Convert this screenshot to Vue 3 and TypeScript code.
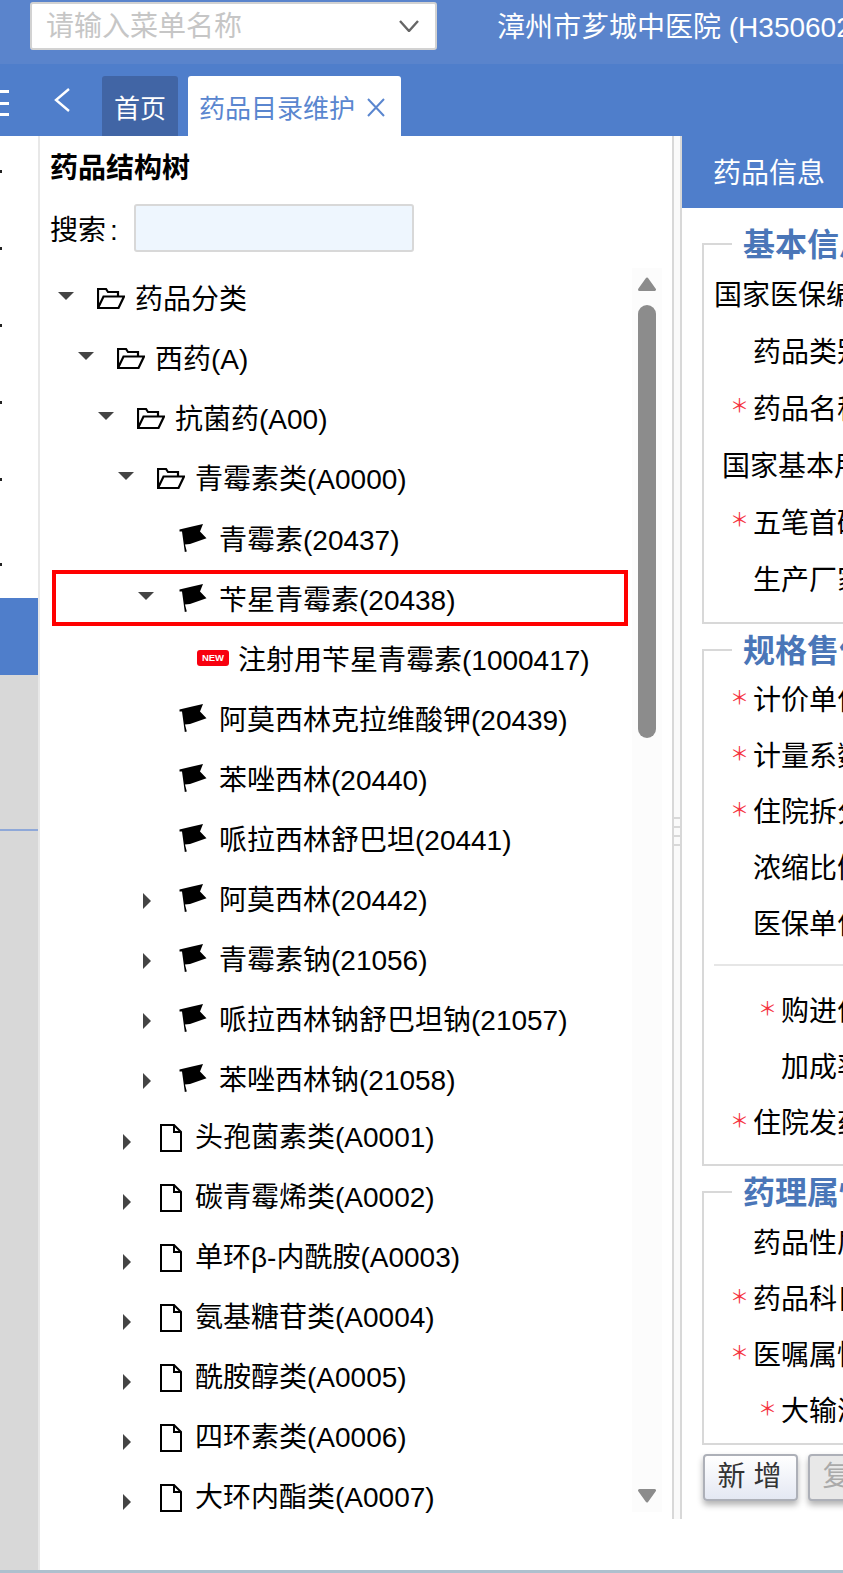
<script setup lang="ts">
type Kind = 'folder' | 'flag' | 'file' | 'new'
type Arrow = 'down' | 'right' | 'none'
interface TreeRow { label: string; level: number; kind: Kind; arrow: Arrow; marked?: boolean }
interface FormRow { label: string; x: number; star?: boolean; rule?: boolean }

const rows: TreeRow[] = [
  { label: '药品分类', level: 0, kind: 'folder', arrow: 'down' },
  { label: '西药(A)', level: 1, kind: 'folder', arrow: 'down' },
  { label: '抗菌药(A00)', level: 2, kind: 'folder', arrow: 'down' },
  { label: '青霉素类(A0000)', level: 3, kind: 'folder', arrow: 'down' },
  { label: '青霉素(20437)', level: 4, kind: 'flag', arrow: 'none' },
  { label: '苄星青霉素(20438)', level: 4, kind: 'flag', arrow: 'down', marked: true },
  { label: '注射用苄星青霉素(1000417)', level: 5, kind: 'new', arrow: 'none' },
  { label: '阿莫西林克拉维酸钾(20439)', level: 4, kind: 'flag', arrow: 'none' },
  { label: '苯唑西林(20440)', level: 4, kind: 'flag', arrow: 'none' },
  { label: '哌拉西林舒巴坦(20441)', level: 4, kind: 'flag', arrow: 'none' },
  { label: '阿莫西林(20442)', level: 4, kind: 'flag', arrow: 'right' },
  { label: '青霉素钠(21056)', level: 4, kind: 'flag', arrow: 'right' },
  { label: '哌拉西林钠舒巴坦钠(21057)', level: 4, kind: 'flag', arrow: 'right' },
  { label: '苯唑西林钠(21058)', level: 4, kind: 'flag', arrow: 'right' },
  { label: '头孢菌素类(A0001)', level: 3, kind: 'file', arrow: 'right' },
  { label: '碳青霉烯类(A0002)', level: 3, kind: 'file', arrow: 'right' },
  { label: '单环β-内酰胺(A0003)', level: 3, kind: 'file', arrow: 'right' },
  { label: '氨基糖苷类(A0004)', level: 3, kind: 'file', arrow: 'right' },
  { label: '酰胺醇类(A0005)', level: 3, kind: 'file', arrow: 'right' },
  { label: '四环素类(A0006)', level: 3, kind: 'file', arrow: 'right' },
  { label: '大环内酯类(A0007)', level: 3, kind: 'file', arrow: 'right' }
]

const sections: { title: string; cls: string; rows: FormRow[] }[] = [
  {
    title: '基本信息',
    cls: 'sec-a',
    rows: [
      { label: '国家医保编码', x: 714 },
      { label: '药品类别', x: 753 },
      { label: '药品名称', x: 753, star: true },
      { label: '国家基本用药', x: 722 },
      { label: '五笔首码', x: 753, star: true },
      { label: '生产厂家', x: 753 }
    ]
  },
  {
    title: '规格售价',
    cls: 'sec-b',
    rows: [
      { label: '计价单位', x: 753, star: true },
      { label: '计量系数', x: 753, star: true },
      { label: '住院拆分', x: 753, star: true },
      { label: '浓缩比例', x: 753 },
      { label: '医保单位', x: 753 },
      { label: '购进价', x: 781, star: true, rule: true },
      { label: '加成率', x: 781 },
      { label: '住院发药', x: 753, star: true }
    ]
  },
  {
    title: '药理属性',
    cls: 'sec-c',
    rows: [
      { label: '药品性质', x: 753 },
      { label: '药品科目', x: 753, star: true },
      { label: '医嘱属性', x: 753, star: true },
      { label: '大输液', x: 781, star: true }
    ]
  }
]

const menuItems = [1, 2, 3, 4, 5, 6]
const rowIndent = (r: TreeRow) => `${18 + r.level * 20}px`
const formIndent = (r: FormRow) => `${r.x - 714 - (r.star ? 22 : 0)}px`
</script>

<template>
  <div class="page">
    <header class="topbar">
      <div class="menu-search">
        <span class="placeholder">请输入菜单名称</span>
        <svg class="chev" width="20" height="12" viewBox="0 0 20 12"><path d="M1 1l9 10 9-10" fill="none" stroke="#666" stroke-width="2.4" /></svg>
      </div>
      <div class="hospital">漳州市芗城中医院 (H350602000000)</div>
    </header>

    <nav class="tabbar">
      <div class="burger"><i></i><i></i><i></i></div>
      <svg class="back" width="16" height="24" viewBox="0 0 16 24"><path d="M15 1L2 12l13 11" fill="none" stroke="#fff" stroke-width="2.4" /></svg>
      <div class="tab tab-home">首页</div>
      <div class="tab tab-active">
        <span class="tab-text">药品目录维护</span>
        <svg class="close" width="18" height="19" viewBox="0 0 18 19"><path d="M1 1l16 17M17 1L1 18" fill="none" stroke="#5a86cf" stroke-width="2" /></svg>
      </div>
    </nav>

    <div class="body">
      <aside class="sidebar">
        <div class="menu">
          <div v-for="m in menuItems" :key="m" class="menu-item" :class="{ last: m === 6 }"><i class="dot"></i></div>
        </div>
        <div class="menu-active"></div>
        <div class="menu-rest"><div class="menu-line"></div></div>
      </aside>

      <section class="tree-panel">
        <h2 class="tree-title">药品结构树</h2>
        <div class="tree-search">
          <label class="tree-label">搜索<span class="colon">:</span></label>
          <div class="tree-input"></div>
        </div>
        <div class="tree-wrap">
          <div class="tree-list">
            <div
              v-for="r in rows"
              :key="r.label"
              class="row"
              :class="'row-' + r.kind"
              :style="{ paddingLeft: rowIndent(r) }"
            >
              <span class="arrow-slot">
                <i v-if="r.arrow === 'down'" class="arrow-down"></i>
                <i v-else-if="r.arrow === 'right'" class="arrow-right" :class="{ 'arrow-flag': r.kind === 'flag' }"></i>
              </span>
              <span class="icon-slot">
                <svg v-if="r.kind === 'folder'" width="28" height="21" viewBox="0 0 28 21">
                  <path d="M1 20V1h8l2 3h10v4.500M1 20L6.500 8.500H27L21.500 20Z" fill="none" stroke="#000" stroke-width="2.200" />
                </svg>
                <svg v-else-if="r.kind === 'flag'" class="flag" width="28" height="28" viewBox="0 0 28 28">
                  <path d="M0.500 5.500L11 3 24 0 21 7.600 27.500 14.300 11 20 6 20.500 7.800 27.500 5.800 28 3 7.500 0.500 7.500Z" fill="#000" />
                </svg>
                <svg v-else-if="r.kind === 'file'" class="file" width="22" height="28" viewBox="0 0 22 28">
                  <path d="M1 1h13l7 7v19H1ZM14 1v7h7" fill="none" stroke="#000" stroke-width="2" />
                </svg>
                <span v-else class="badge-new">NEW</span>
              </span>
              <span class="row-text">{{ r.label }}</span>
              <span v-if="r.marked" class="mark"></span>
            </div>
          </div>
          <div class="scroll">
            <svg class="sc-up" width="18" height="14" viewBox="0 0 18 14"><path d="M9 2L16.500 12.500H1.500Z" fill="#8c8c8c" stroke="#8c8c8c" stroke-width="3" stroke-linejoin="round" /></svg>
            <div class="sc-thumb"></div>
            <svg class="sc-down" width="18" height="14" viewBox="0 0 18 14"><path d="M9 12L16.500 1.500H1.500Z" fill="#8c8c8c" stroke="#8c8c8c" stroke-width="3" stroke-linejoin="round" /></svg>
          </div>
        </div>
      </section>

      <div class="split">
        <div class="grip"><i></i><i></i><i></i><i></i></div>
      </div>

      <section class="detail">
        <div class="detail-head">药品信息</div>
        <div class="detail-body">
          <fieldset v-for="s in sections" :key="s.title" class="group" :class="s.cls">
            <legend class="group-title">{{ s.title }}</legend>
            <template v-for="r in s.rows" :key="r.label">
              <div v-if="r.rule" class="rule"></div>
              <div class="form-row" :style="{ paddingLeft: formIndent(r) }">
                <span v-if="r.star" class="star">＊</span>
                <span>{{ r.label }}：</span>
              </div>
            </template>
          </fieldset>
          <div class="actions">
            <button class="btn" type="button"><span class="btn-text">新 增</span></button>
            <button class="btn btn-off" type="button"><span class="btn-text">复 制</span></button>
          </div>
        </div>
      </section>
    </div>
    <div class="foot"></div>
  </div>
</template>

<style>
html, body { margin: 0; padding: 0; overflow: hidden; background: #fff; }
</style>

<style scoped>
.page {
  width: 843px;
  height: 1573px;
  overflow: hidden;
  display: flex;
  flex-direction: column;
  font-family: "Liberation Sans", "Noto Sans CJK SC", sans-serif;
  font-size: 28px;
  color: #000;
  background: #fff;
}
.topbar {
  height: 64px;
  flex: none;
  display: flex;
  background: #5a84cc;
  padding: 2px 0 0 30px;
  box-sizing: border-box;
}
.menu-search {
  width: 407px;
  height: 48px;
  flex: none;
  box-sizing: border-box;
  background: #fff;
  border: 2px solid #d2d2d2;
  border-radius: 3px;
  display: flex;
  align-items: center;
  padding-left: 14px;
}
.placeholder { color: #c6c6c6; line-height: 44px; padding-top: 2px; }
.chev { margin-left: auto; margin-right: 16px; }
.hospital {
  margin-left: 60px;
  color: #fff;
  white-space: nowrap;
  line-height: 48px;
  padding-top: 2px;
}
.tabbar {
  height: 72px;
  flex: none;
  display: flex;
  align-items: flex-end;
  background: #4f7ecb;
}
.burger {
  width: 9px;
  align-self: flex-start;
  margin-top: 26px;
  display: flex;
  flex-direction: column;
  gap: 8.500px;
}
.burger i { display: block; height: 3px; background: #fff; }
.back { align-self: flex-start; margin: 24px 0 0 45px; }
.tab {
  height: 60px;
  box-sizing: border-box;
  font-size: 26px;
  border-radius: 3px 3px 0 0;
  white-space: nowrap;
}
.tab-home {
  width: 76px;
  margin-left: 32px;
  text-align: center;
  line-height: 66px;
  background: #4165a5;
  color: #fff;
}
.tab-active {
  width: 213px;
  margin-left: 10px;
  padding-left: 11px;
  background: #fff;
  color: #5a86cf;
  display: flex;
  align-items: center;
  gap: 12px;
}
.tab-text { line-height: 60px; padding-top: 6px; }
.close { flex: none; margin-top: 3px; }
.body { flex: 1; min-height: 0; display: flex; align-items: stretch; }
.sidebar {
  width: 40px;
  flex: none;
  box-sizing: border-box;
  border-right: 2px solid #e8e8e8;
  display: flex;
  flex-direction: column;
}
.menu-item { height: 77px; box-sizing: border-box; padding-top: 34px; }
.menu-item.last { padding-top: 42px; }
.dot { display: block; width: 2px; height: 3px; background: #222; }
.menu-active { height: 77px; flex: none; background: #4f7ecb; }
.menu-rest { flex: 1; background: #d8d8d8; padding-top: 154px; }
.menu-line { height: 2px; background: #8fa8d8; }
.tree-panel { width: 632px; flex: none; display: flex; flex-direction: column; }
.tree-title {
  margin: 0;
  padding: 2px 0 0 10px;
  font-size: 28px;
  font-weight: 700;
  line-height: 62px;
  height: 64px;
  box-sizing: border-box;
}
.tree-search { display: flex; align-items: center; margin-top: 4px; padding-left: 10px; }
.tree-label { width: 84px; flex: none; line-height: 48px; padding-top: 3px; box-sizing: border-box; height: 48px; }
.colon { margin-left: 4px; }
.tree-input {
  width: 280px;
  height: 48px;
  box-sizing: border-box;
  background: #eef6fe;
  border: 2px solid #d8d8d8;
  border-radius: 3px;
}
.tree-wrap { display: flex; margin-top: 16px; }
.tree-list { width: 592px; height: 1244px; flex: none; }
.row {
  position: relative;
  height: 60px;
  box-sizing: border-box;
  display: flex;
  align-items: center;
  white-space: nowrap;
}
.arrow-slot { width: 39px; flex: none; display: flex; align-items: center; }
.icon-slot { width: 38px; flex: none; display: flex; align-items: center; }
.row-flag .icon-slot { width: 42px; }
.row-new .icon-slot { width: 41px; }
.row-text { line-height: 60px; height: 60px; box-sizing: border-box; }
.row-folder .row-text { padding-top: 2px; }
.row-flag .row-text { padding-top: 3px; }
.row-new .row-text { padding-top: 3px; }
.arrow-down {
  display: block;
  margin-top: -4px;
  border-left: 8px solid transparent;
  border-right: 8px solid transparent;
  border-top: 8px solid #444;
}
.arrow-right {
  display: block;
  margin: 8px 0 0 5px;
  border-top: 8px solid transparent;
  border-bottom: 8px solid transparent;
  border-left: 8px solid #444;
}
.arrow-flag { margin-top: 6px; }
.file { margin-left: 3px; }
.flag { margin-left: 2px; }
.badge-new {
  width: 32px;
  height: 16px;
  box-sizing: border-box;
  background: #f8000f;
  border-radius: 3px;
  color: #fff;
  font-size: 9.500px;
  font-weight: 700;
  line-height: 16px;
  text-align: center;
}
.mark {
  position: absolute;
  left: 12px;
  top: 2px;
  width: 576px;
  height: 56px;
  box-sizing: border-box;
  border: 4px solid #f00;
}
.scroll {
  width: 30px;
  height: 1244px;
  flex: none;
  background: #fcfcfc;
  display: flex;
  flex-direction: column;
  align-items: center;
  box-sizing: border-box;
  padding: 9px 0;
}
.sc-thumb { width: 18px; height: 433px; margin-top: 14px; background: #8c8c8c; border-radius: 9px; }
.sc-down { margin-top: auto; }
.split {
  width: 10px;
  height: 1383px;
  flex: none;
  box-sizing: border-box;
  background: #fafafa;
  border-left: 2px solid #d8d8d8;
  border-right: 2px solid #d8d8d8;
  padding-top: 681px;
}
.grip { display: flex; flex-direction: column; gap: 7px; }
.grip i { display: block; height: 2px; width: 6px; background: #d8d8d8; }
.detail { flex: 1; min-width: 0; overflow: hidden; }
.detail-head {
  height: 72px;
  background: #4f7ecb;
  color: #fff;
  padding-left: 31px;
  line-height: 76px;
  box-sizing: border-box;
}
.detail-body { padding: 18px 0 0 20px; width: 700px; }
.group {
  margin: 0 0 8px;
  padding: 0 0 0 10px;
  border: 2px solid #d8d8d8;
  min-width: 0;
}
.group-title {
  margin-left: 18px;
  padding: 3px 11px 1px;
  font-size: 32px;
  font-weight: 700;
  line-height: 32px;
  color: #4a76b8;
}
.sec-a { padding-top: 2px; padding-bottom: 16px; }
.sec-b { padding-top: 2px; padding-bottom: 15px; }
.sec-c { padding-top: 3px; padding-bottom: 6px; margin-bottom: 9px; }
.form-row { height: 57px; display: flex; align-items: center; white-space: nowrap; }
.sec-b .form-row, .sec-c .form-row { height: 56px; }
.star { width: 22px; flex: none; color: #f5333f; font-size: 19px; line-height: 57px; margin-left: -1px; margin-right: 1px; }
.rule { height: 2px; background: #e6e6e6; margin: 14px 0 15px; }
.actions { display: flex; gap: 10px; padding-left: 1px; }
.btn {
  width: 95px;
  height: 47px;
  padding: 0 2px 2px 0;
  box-sizing: border-box;
  font-family: inherit;
  font-size: 28px;
  color: #333;
  border: 2px solid #adb0b8;
  border-radius: 4px;
  background: linear-gradient(#fff, #e4e8f3);
  box-shadow: 0 4px 6px rgba(0, 0, 0, 0.3);
}
.btn-text { line-height: 36px; }
.btn-off { background: #e8e8e8; color: #aaa; flex: none; }
.foot { height: 3px; flex: none; background: #aec0ce; }
</style>
